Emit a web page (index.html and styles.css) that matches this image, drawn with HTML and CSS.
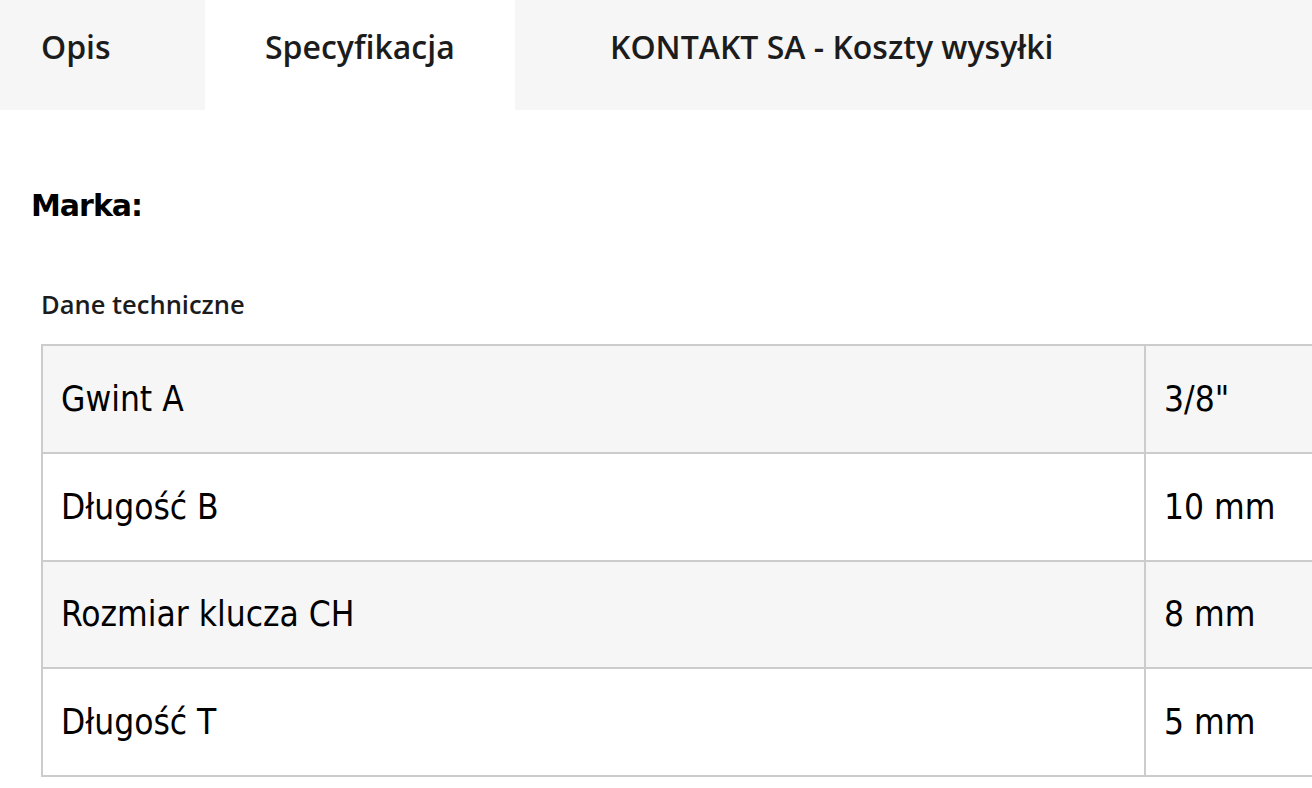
FILE: index.html
```html
<!DOCTYPE html>
<html lang="pl">
<head>
<meta charset="utf-8">
<title>Specyfikacja</title>
<link rel="stylesheet" href="styles.css">
</head>
<body>
<div class="page">
  <nav class="tabs">
    <div class="tab tab-first">Opis</div>
    <div class="tab tab-active">Specyfikacja</div>
    <div class="tab tab-last">KONTAKT SA - Koszty wysyłki</div>
  </nav>
  <section class="content">
    <h2 class="brand">Marka:</h2>
    <div class="section-title">Dane techniczne</div>
    <table class="spec">
      <tr class="odd"><td class="name">Gwint A</td><td class="value">3/8"</td></tr>
      <tr><td class="name">Długość B</td><td class="value">10 mm</td></tr>
      <tr class="odd"><td class="name">Rozmiar klucza CH</td><td class="value">8 mm</td></tr>
      <tr><td class="name">Długość T</td><td class="value">5 mm</td></tr>
    </table>
  </section>
</div>
</body>
</html>
```

FILE: styles.css
```css
html, body {
  margin: 0;
  padding: 0;
  background: #ffffff;
}
body {
  width: 1312px;
  height: 788px;
  overflow: hidden;
}
.page {
  width: 1312px;
}
.tabs {
  display: flex;
  height: 110px;
}
.tab {
  box-sizing: border-box;
  height: 110px;
  padding-top: 25px;
  font-family: "Open Sans", sans-serif;
  font-weight: 600;
  font-size: 32px;
  line-height: 44px;
  color: #1c1c1c;
  background: #f6f6f6;
  white-space: nowrap;
}
.tab-first {
  width: 205px;
  padding-left: 41px;
}
.tab-active {
  width: 310px;
  padding-left: 60px;
  background: #ffffff;
}
.tab-last {
  flex: 1;
  padding-left: 95px;
}
.content {
  padding-left: 31px;
}
.brand {
  margin: 0;
  padding-top: 79px;
  font-family: "DejaVu Sans", sans-serif;
  font-weight: bold;
  font-size: 30px;
  letter-spacing: -1px;
  line-height: 34px;
  color: #000;
}
.section-title {
  margin-top: 64px;
  padding-left: 10px;
  font-family: "Open Sans", sans-serif;
  font-weight: 600;
  font-size: 25.5px;
  line-height: 34px;
  color: #1c1c1c;
}
.spec {
  margin-top: 23px;
  margin-left: 10px;
  width: 1340px;
  border-collapse: collapse;
  font-family: "DejaVu Sans Condensed", "DejaVu Sans", sans-serif;
  font-size: 35px;
  color: #000;
}
.spec td {
  border: 2px solid #cccccc;
  height: 105.75px;
  padding: 0 0 0 18px;
  vertical-align: middle;
}
.spec .odd td {
  background: #f6f6f6;
}
.spec .name {
  width: 1083px;
}
```
